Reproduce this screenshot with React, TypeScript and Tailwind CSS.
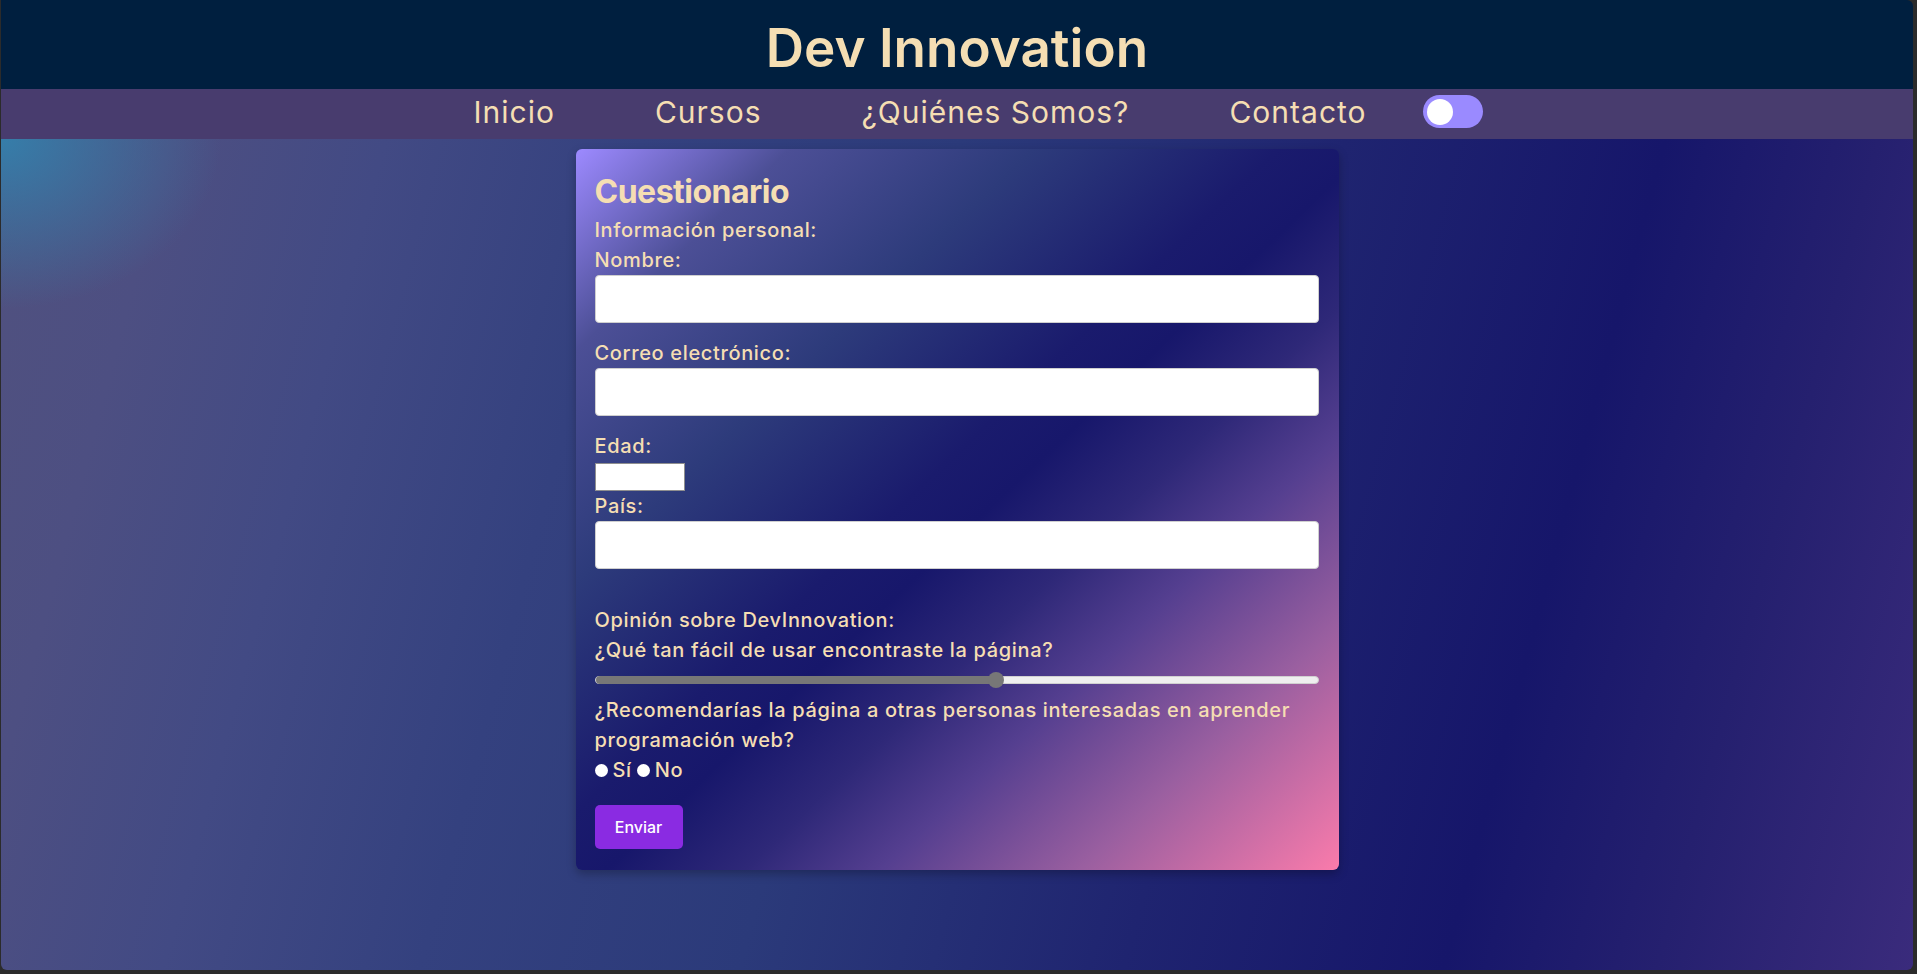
import React from "react";

function Label({ children, className = "" }: { children: React.ReactNode; className?: string }) {
  return (
    <div className={`text-[20px] leading-[30px] font-medium tracking-[0.65px] text-[#f5deb3] ${className}`}>
      {children}
    </div>
  );
}

function TextInput({ className = "" }: { className?: string }) {
  return (
    <input
      type="text"
      className={`block w-full h-[48px] bg-white border border-[#cfcfcf] rounded-[4px] outline-none ${className}`}
    />
  );
}

export default function App() {
  return (
    <div className="h-[974px] w-full bg-[#2b2b2b] pl-[1px] pr-[4px] pb-[4px] font-['Inter','Noto_Sans',sans-serif]">
      <div className="h-full flex flex-col overflow-hidden rounded-tr-[6px] rounded-b-[6px]">
        <header className="h-[89px] shrink-0 bg-[#001f3f] flex items-center justify-center pt-[8px]">
          <h1 className="text-[53px] font-semibold leading-none text-[#f5deb3]">Dev Innovation</h1>
        </header>
        <nav className="h-[50px] shrink-0 bg-[#483c6e] flex items-center justify-center pr-[8px]">
          {["Inicio", "Cursos", "¿Quiénes Somos?", "Contacto"].map((t) => (
            <a
              key={t}
              href="#"
              className="px-[50px] text-[30px] leading-none tracking-[1px] text-[#f5deb3] no-underline -mt-[4px]"
            >
              {t}
            </a>
          ))}
          <button
            aria-label="toggle"
            className="ml-[6px] -mt-[5px] w-[60px] h-[33px] rounded-full bg-[#9a8aff] flex items-center pl-[4px]"
          >
            <span className="block w-[26px] h-[26px] rounded-full bg-white" />
          </button>
        </nav>
        <main className="flex-1 flex justify-center pt-[10px] bg-[radial-gradient(ellipse_220px_170px_at_0%_0%,rgba(52,128,172,0.95)_0%,rgba(52,128,172,0)_100%),linear-gradient(105deg,#50517f_0%,#4d4f82_8%,#424a84_18%,#34417f_30%,#2b3a7a_45%,#1f2470_63%,#16166a_78%,#25206f_88%,#3a2b7c_100%)]">
          <form
            onSubmit={(e) => e.preventDefault()}
            className="w-[763px] h-[721px] rounded-[6px] pl-[19px] pr-[20px] pt-[20px] pb-[21px] bg-[linear-gradient(to_bottom_right,#9d8aff_0%,#4c4f96_14%,#2d3b7b_30%,#1a1b6d_46%,#17176b_52%,#2e2878_61%,#553f90_70%,#9a5fa0_83%,#fa7bab_100%)] shadow-[0_4px_10px_rgba(0,0,0,0.25)]"
          >
            <h2 className="text-[32px] font-bold leading-[46px] text-[#f5deb3] tracking-[-0.5px]">Cuestionario</h2>
            <Label>Información personal:</Label>
            <Label>Nombre:</Label>
            <TextInput />
            <Label className="mt-[15px]">Correo electrónico:</Label>
            <TextInput />
            <Label className="mt-[15px]">Edad:</Label>
            <input
              type="text"
              className="block mt-[2px] w-[90px] h-[28px] bg-white border border-[#8f8f8f] outline-none"
            />
            <Label>País:</Label>
            <TextInput />
            <Label className="mt-[36px]">Opinión sobre DevInnovation:</Label>
            <Label>¿Qué tan fácil de usar encontraste la página?</Label>
            <div className="h-[30px] flex items-center">
              <div className="relative w-full h-[8px] rounded-full bg-[#efefef] border border-[#d0d0d0]">
                <div className="absolute left-0 top-[-1px] h-[8px] w-[55.5%] rounded-full bg-[#777777]" />
                <div className="absolute left-[55.5%] top-1/2 -translate-x-1/2 -translate-y-1/2 w-[16px] h-[16px] rounded-full bg-[#777777]" />
              </div>
            </div>
            <Label>
              ¿Recomendarías la página a otras personas interesadas en aprender
              <br />
              programación web?
            </Label>
            <Label className="flex items-center">
              <span className="inline-block w-[13px] h-[13px] rounded-full bg-white" />
              <span className="ml-[5px]">Sí</span>
              <span className="ml-[5px] inline-block w-[13px] h-[13px] rounded-full bg-white" />
              <span className="ml-[5px]">No</span>
            </Label>
            <button
              type="submit"
              className="mt-[20px] w-[88px] h-[44px] rounded-[5px] bg-[#8a2be2] text-white text-[16px] font-medium"
            >
              Enviar
            </button>
          </form>
        </main>
      </div>
    </div>
  );
}
